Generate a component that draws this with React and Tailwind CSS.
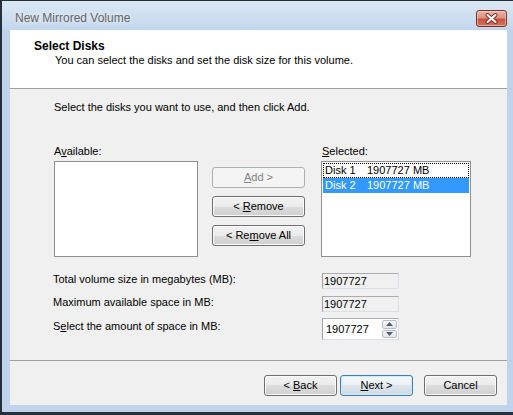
import React from 'react';

const btn =
  'flex h-[21px] shrink-0 items-center justify-center rounded-[3px] border text-[11px] leading-none';
const btnNormal =
  'border-[#707070] bg-[linear-gradient(#f2f2f2,#ebebeb_50%,#dddddd_50%,#cfcfcf)] shadow-[inset_0_0_0_1px_#fbfbfb] text-black';
const btnDefault =
  'border-[#3c7fb1] bg-[linear-gradient(#f4f8fb,#eaf0f5_50%,#dde5ec_50%,#d0dbe4)] shadow-[inset_0_0_0_1px_#cfeaf9] text-black';
const btnDisabled = 'border-[#adb2b5] bg-[#f4f4f4] text-[#838383]';

const Key = ({ children }) => <span className="underline underline-offset-1">{children}</span>;

function CloseButton() {
  return (
    <div className="mt-[9px] flex h-[17px] w-[31px] items-center justify-center rounded-[3px] border border-[#7a3328] bg-[linear-gradient(#eab5a9,#dc9282_45%,#c8543e_55%,#d27660)] shadow-[inset_0_0_0_1px_rgba(255,220,210,0.5)]">
      <svg width="13" height="11" viewBox="0 0 13 11">
        <path d="M2.5 2 L10.5 9 M10.5 2 L2.5 9" stroke="#7c2a20" strokeWidth="4" strokeLinecap="round" />
        <path d="M2.5 2 L10.5 9 M10.5 2 L2.5 9" stroke="#fff" strokeWidth="2.2" strokeLinecap="round" />
      </svg>
    </div>
  );
}

function ReadOnlyBox({ value }) {
  return (
    <div className="flex h-[16px] w-[77px] shrink-0 items-center border border-[#dbdfe6] border-l-[#9da1a8] border-t-[#abadb3] pl-[1px] text-[11px] leading-[14px]">
      {value}
    </div>
  );
}

function SpinBox() {
  return (
    <div className="flex h-[22px] w-[77px] shrink-0 border border-[#dbdfe6] border-l-[#9da1a8] border-t-[#abadb3] bg-white">
      <div className="flex flex-1 items-center pb-[1px] pl-[3px] text-[11px] leading-[14px]">1907727</div>
      <div className="flex w-[17px] flex-col gap-[1px] p-[1px]">
        <div className="flex flex-1 items-center justify-center rounded-[2px] border border-[#b7bdc6] bg-[linear-gradient(#f7f7f7,#e3e6ea)]">
          <svg width="7" height="4" viewBox="0 0 7 4">
            <path d="M0 4 L3.5 0 L7 4 Z" fill="#4c607e" />
          </svg>
        </div>
        <div className="flex flex-1 items-center justify-center rounded-[2px] border border-[#b7bdc6] bg-[linear-gradient(#f7f7f7,#e3e6ea)]">
          <svg width="7" height="4" viewBox="0 0 7 4">
            <path d="M0 0 L7 0 L3.5 4 Z" fill="#4c607e" />
          </svg>
        </div>
      </div>
    </div>
  );
}

export default function App() {
  return (
    <div className="h-[415px] w-[513px] overflow-hidden font-['Liberation_Sans',Arial,sans-serif] text-black">
      <div className="flex h-full flex-col border-b-[3px] border-l-2 border-t border-[#26303b] bg-[#bfd4eb]">
        {/* Title bar */}
        <div className="flex h-[29px] shrink-0 items-start justify-between bg-[linear-gradient(#dce8f5,#c2d6ec)] pl-[13px] pr-[6px]">
          <span className="mt-[10px] text-[12px] leading-[15px] text-[#666666] [text-shadow:0_0_6px_rgba(255,255,255,0.95)]">
            New Mirrored Volume
          </span>
          <CloseButton />
        </div>

        {/* Client area */}
        <div className="mb-[7px] ml-[8px] mr-[6px] flex flex-1 flex-col bg-[#f0f0f0]">
          {/* Header */}
          <div className="h-[59px] shrink-0 border-b border-[#a0a0a0] bg-white pl-[24px] pt-[9px]">
            <div className="text-[12px] font-bold leading-[15px]">Select Disks</div>
            <div className="ml-[21px] text-[11px] leading-[13px]">
              You can select the disks and set the disk size for this volume.
            </div>
          </div>

          {/* Body */}
          <div className="flex-1 pl-[44px] pt-[12px] text-[11px] leading-[13px]">
            <div>Select the disks you want to use, and then click Add.</div>

            <div className="mt-[31px] flex items-start">
              <div className="w-[144px] shrink-0">
                <div>
                  A<Key>v</Key>ailable:
                </div>
                <div className="mt-[3px] h-[96px] border border-[#8e9094] bg-white" />
              </div>

              <div className="ml-[14px] flex w-[93px] shrink-0 flex-col gap-[8px] pt-[22px]">
                <div className={`${btn} ${btnDisabled}`}>
                  <span>
                    <Key>A</Key>dd &gt;
                  </span>
                </div>
                <div className={`${btn} ${btnNormal}`}>
                  <span>
                    &lt; <Key>R</Key>emove
                  </span>
                </div>
                <div className={`${btn} ${btnNormal}`}>
                  <span>
                    &lt; Re<Key>m</Key>ove All
                  </span>
                </div>
              </div>

              <div className="ml-[16px] w-[150px] shrink-0">
                <div className="pl-[1px]">
                  <Key>S</Key>elected:
                </div>
                <div className="mt-[3px] h-[96px] border border-[#8e9094] bg-white p-[1px]">
                  <div className="flex h-[15px] items-center pl-[2px] leading-[15px] [outline:1px_dotted_#000] [outline-offset:-1px]">
                    <span className="w-[42px]">Disk 1</span>
                    <span>1907727 MB</span>
                  </div>
                  <div className="flex h-[15px] items-center bg-[#3399ff] pl-[2px] leading-[15px] text-white">
                    <span className="w-[42px]">Disk 2</span>
                    <span>1907727 MB</span>
                  </div>
                </div>
              </div>
            </div>

            <div className="-ml-[1px] mt-[16px] flex items-start">
              <div className="w-[269px] shrink-0">Total volume size in megabytes (MB):</div>
              <ReadOnlyBox value="1907727" />
            </div>
            <div className="-ml-[1px] mt-[7px] flex items-start">
              <div className="w-[269px] shrink-0">Maximum available space in MB:</div>
              <ReadOnlyBox value="1907727" />
            </div>
            <div className="-ml-[1px] mt-[6px] flex items-start">
              <div className="mt-[2px] w-[269px] shrink-0">
                S<Key>e</Key>lect the amount of space in MB:
              </div>
              <SpinBox />
            </div>
          </div>

          {/* Footer */}
          <div className="flex h-[45px] shrink-0 justify-end border-t border-[#a0a0a0] pr-[10px] pt-[14px]">
            <div className={`${btn} ${btnNormal} w-[73px]`}>
              <span>
                &lt; <Key>B</Key>ack
              </span>
            </div>
            <div className={`${btn} ${btnDefault} ml-[3px] w-[73px]`}>
              <span>
                <Key>N</Key>ext &gt;
              </span>
            </div>
            <div className={`${btn} ${btnNormal} ml-[11px] w-[73px]`}>Cancel</div>
          </div>
        </div>
      </div>
    </div>
  );
}
